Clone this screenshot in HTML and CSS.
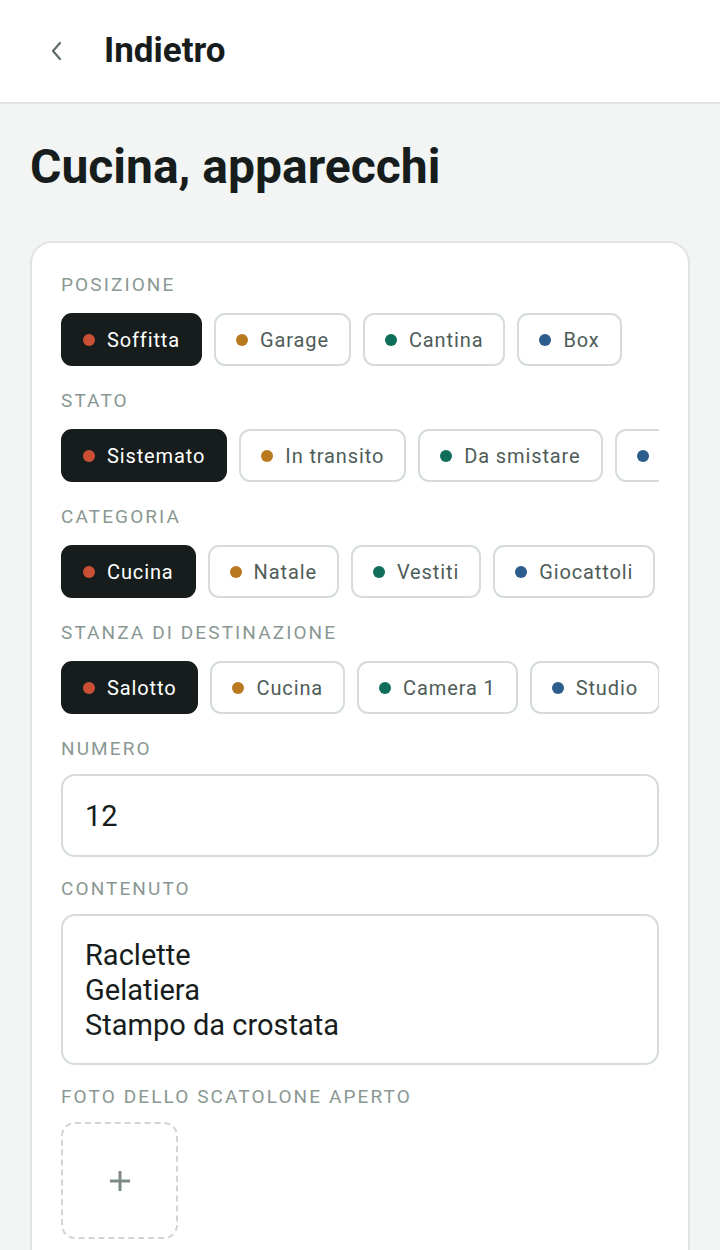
FILE: index.html
```
<!DOCTYPE html>
<html lang="it">
<head>
<meta charset="utf-8">
<title>Cucina, apparecchi</title>
<link rel="stylesheet" href="styles.css">
</head>
<body>
<header class="topbar">
  <button class="back" aria-label="Indietro">
    <svg viewBox="0 0 24 24" width="24" height="24"><path d="M15 4 L8 12 L15 20" fill="none" stroke="#5d6c68" stroke-width="2.2" stroke-linecap="round" stroke-linejoin="round"/></svg>
  </button>
  <span class="back-label">Indietro</span>
</header>
<main class="page">
  <h1 class="title">Cucina, apparecchi</h1>
  <section class="card">
    <div class="field">
      <div class="label">Posizione</div>
      <div class="chips">
        <span class="chip selected"><i class="dot red"></i>Soffitta</span>
        <span class="chip"><i class="dot amber"></i>Garage</span>
        <span class="chip"><i class="dot teal"></i>Cantina</span>
        <span class="chip"><i class="dot blue"></i>Box</span>
      </div>
    </div>
    <div class="field">
      <div class="label">Stato</div>
      <div class="chips">
        <span class="chip selected"><i class="dot red"></i>Sistemato</span>
        <span class="chip"><i class="dot amber"></i>In transito</span>
        <span class="chip"><i class="dot teal"></i>Da smistare</span>
        <span class="chip"><i class="dot blue"></i>Da buttare</span>
      </div>
    </div>
    <div class="field">
      <div class="label">Categoria</div>
      <div class="chips">
        <span class="chip selected"><i class="dot red"></i>Cucina</span>
        <span class="chip"><i class="dot amber"></i>Natale</span>
        <span class="chip"><i class="dot teal"></i>Vestiti</span>
        <span class="chip"><i class="dot blue"></i>Giocattoli</span>
      </div>
    </div>
    <div class="field">
      <div class="label">Stanza di destinazione</div>
      <div class="chips">
        <span class="chip selected"><i class="dot red"></i>Salotto</span>
        <span class="chip"><i class="dot amber"></i>Cucina</span>
        <span class="chip"><i class="dot teal"></i>Camera 1</span>
        <span class="chip"><i class="dot blue"></i>Studio</span>
      </div>
    </div>
    <div class="field">
      <div class="label">Numero</div>
      <div class="input">12</div>
    </div>
    <div class="field">
      <div class="label">Contenuto</div>
      <div class="input textarea">Raclette<br>Gelatiera<br>Stampo da crostata</div>
    </div>
    <div class="field">
      <div class="label">Foto dello scatolone aperto</div>
      <div class="photo-add">
        <svg viewBox="0 0 24 24" width="24" height="24"><path d="M12 2 V22 M2 12 H22" stroke="#7d8a86" stroke-width="3" fill="none"/></svg>
      </div>
    </div>
  </section>
</main>
</body>
</html>
```
FILE: styles.css
```
* { box-sizing: border-box; }
html, body { margin: 0; padding: 0; }
body {
  font-family: Roboto, "Noto Sans", "Liberation Sans", sans-serif;
  background: #f3f5f4;
  color: #161d1c;
  height: 1250px;
  overflow: hidden;
}
.topbar {
  height: 104px;
  background: #fff;
  border-bottom: 2px solid #dfe3e2;
  display: flex;
  align-items: center;
  padding-left: 45px;
}
.back {
  border: 0;
  background: none;
  padding: 0;
  width: 24px;
  height: 24px;
  display: flex;
  margin-right: 35px;
}
.back svg { width: 24px; height: 24px; }
.back-label {
  font-size: 35px;
  line-height: 40px;
  font-weight: 700;
  color: #161d1c;
}
.page { padding: 35px 30px 0; }
.title {
  margin: 0 0 46px;
  font-size: 48px;
  line-height: 56px;
  font-weight: 700;
  color: #161d1c;
}
.card {
  background: #fff;
  border: 2px solid #e0e5e3;
  border-radius: 22px;
  padding: 30px 29px 40px;
  display: flex;
  flex-direction: column;
  gap: 20px;
  min-height: 1100px;
}
.label {
  font-size: 19px;
  line-height: 24px;
  letter-spacing: 2.1px;
  text-transform: uppercase;
  color: #8a9893;
  margin-bottom: 13px;
}
.chips {
  display: flex;
  gap: 12px;
  flex-wrap: nowrap;
  overflow: hidden;
  padding: 3px 0;
}
.chip {
  flex: none;
  display: inline-flex;
  align-items: center;
  gap: 12px;
  height: 53px;
  padding: 0 20px;
  border: 2px solid #d5dcd9;
  border-radius: 11px;
  background: #fff;
  font-size: 20px;
  letter-spacing: 0.88px;
  color: #4e5c58;
  white-space: nowrap;
}
.chip.selected {
  background: #161d1c;
  border-color: #161d1c;
  color: #fff;
}
.dot {
  width: 12px;
  height: 12px;
  border-radius: 50%;
  flex: none;
}
.dot.red { background: #c94f35; }
.dot.amber { background: #b8791f; }
.dot.teal { background: #0f6e5a; }
.dot.blue { background: #2c5d8c; }
.input {
  border: 2px solid #d5dcd9;
  border-radius: 14px;
  padding: 23px 22px 21px;
  font-size: 29px;
  line-height: 35px;
  color: #161d1c;
  background: #fff;
}
.textarea { padding: 22px 22px 20px; }
.photo-add {
  width: 117px;
  height: 117px;
  border: 2px dashed #cfd6d3;
  border-radius: 14px;
  display: flex;
  align-items: center;
  justify-content: center;
}
```
